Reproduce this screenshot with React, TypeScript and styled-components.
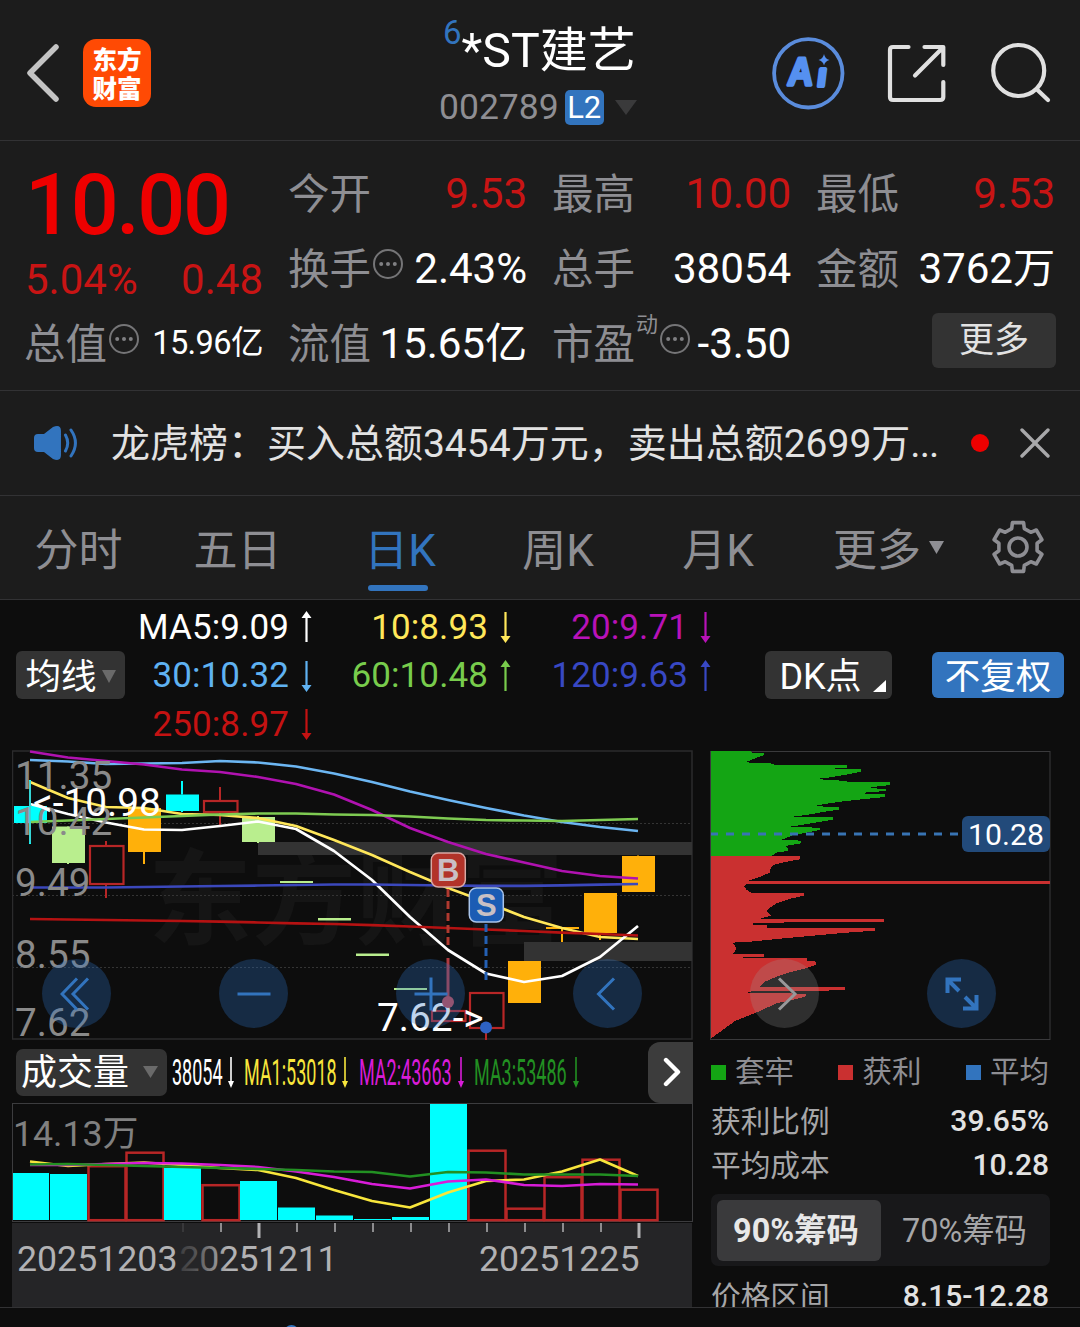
import React from 'react';
import styled, { createGlobalStyle, css } from 'styled-components';

const GlobalStyle = createGlobalStyle`
  *, *::before, *::after { box-sizing: border-box; }
  body {
    margin: 0;
    background: #0d0d0d;
    font-family: Roboto, 'Noto Sans CJK SC', sans-serif;
  }
  svg { display: block; }
`;

const c = {
  panel: '#1c1c1c',
  ground: '#0d0d0d',
  line: '#323234',
  muted: '#8e8e93',
  red: '#c81414',
  blue: '#3274be',
  button: '#333333',
};

const Screen = styled.main`
  width: 1080px;
  height: 1327px;
  overflow: hidden;
  display: flex;
  flex-direction: column;
  background: ${c.ground};
  white-space: nowrap;
`;

/* ---------- header ---------- */

const Header = styled.header`
  height: 141px;
  flex: none;
  display: grid;
  grid-template-columns: 439px 1fr auto;
  background: ${c.panel};
  border-bottom: 1px solid ${c.line};
`;

const HeaderLeft = styled.div`
  display: flex;
  align-items: center;
  gap: 22px;
  padding: 6px 0 0 25px;
`;

const Logo = styled.div`
  width: 68px;
  height: 68px;
  border-radius: 13px;
  background: #ff4a04;
  color: #fff;
  display: flex;
  flex-direction: column;
  align-items: center;
  justify-content: center;
  font: 900 24.5px/29px 'Noto Sans CJK SC', sans-serif;
`;

const TitleBlock = styled.div`
  display: flex;
  flex-direction: column;
  padding-top: 19px;
`;

const StockName = styled.h1`
  margin: 0;
  padding-left: 4px;
  display: flex;
  font-size: 48.2px;
  font-weight: 400;
  line-height: 63px;
  height: 60px;
  color: #fff;
`;

const Rank = styled.span`
  font-size: 33px;
  line-height: 27px;
  color: ${c.blue};
`;

const CodeRow = styled.div`
  display: flex;
  align-items: center;
  height: 36px;
  margin-top: 10px;
  font-size: 35.5px;
  line-height: 37px;
  color: ${c.muted};
  svg { margin-left: 11px; }
`;

const LevelBadge = styled.span`
  margin-left: 6px;
  width: 39px;
  height: 35px;
  border-radius: 5px;
  background: ${c.blue};
  color: #fff;
  font-size: 31px;
  line-height: 35px;
  text-align: center;
`;

const HeaderActions = styled.div`
  display: flex;
  align-items: center;
  padding: 5px 26px 0 0;
`;

/* ---------- quote ---------- */

const Quote = styled.section`
  height: 250px;
  flex: none;
  padding: 14px 25px 0;
  display: grid;
  grid-template-columns: repeat(4, 238px);
  grid-template-rows: repeat(3, 75px);
  column-gap: 26px;
  background: ${c.panel};
  border-bottom: 1px solid ${c.line};
`;

const PriceBlock = styled.div`
  grid-row: span 2;
  display: flex;
  flex-direction: column;
`;

const Price = styled.div`
  height: 99px;
  font-size: 84.5px;
  font-weight: 500;
  line-height: 101px;
  color: #ee0000;
  letter-spacing: -2.4px;
`;

const ChangeRow = styled.div`
  display: flex;
  justify-content: space-between;
  font-size: 42px;
  line-height: 51px;
  color: ${c.red};
`;

const Cell = styled.div`
  display: flex;
  align-items: center;
  height: 75px;
  line-height: 75px;
`;

const CellLabel = styled.span`
  margin-left: -1px;
  padding-top: 3px;
  font-size: 41.5px;
  color: ${c.muted};
`;

const CellValue = styled.span<{ $tone?: 'up'; $small?: boolean }>`
  margin-left: auto;
  padding-top: 1px;
  font-size: ${p => (p.$small ? '32.6px' : '42.2px')};
  letter-spacing: ${p => (p.$small ? '-0.6px' : '-0.1px')};
  color: ${p => (p.$tone === 'up' ? c.red : '#fff')};
`;

const DynMark = styled.span`
  font-size: 22px;
  line-height: 24px;
  align-self: flex-start;
  margin: 8px 0 0 1px;
  color: ${c.muted};
`;

const MoreButton = styled.button`
  margin: -4px -1px 0 auto;
  width: 124px;
  height: 55px;
  padding: 1px 0 0;
  border: 0;
  border-radius: 6px;
  background: ${c.button};
  color: #e2e2e2;
  font: 400 35px/54px Roboto, 'Noto Sans CJK SC', sans-serif;
`;

/* ---------- news ---------- */

const News = styled.section`
  height: 105px;
  flex: none;
  display: flex;
  align-items: center;
  padding: 0 30px 0 33px;
  background: ${c.panel};
  border-bottom: 1px solid ${c.line};
`;

const NewsText = styled.p`
  margin: 0 0 0 32px;
  padding-top: 2px;
  width: 859px;
  font-size: 39px;
  line-height: 60px;
  color: #e2e2e2;
`;

const Ellipse = styled.span`
  letter-spacing: -0.9px;
`;

const Dot = styled.i`
  width: 18px;
  height: 18px;
  margin: 0 31px 0 2px;
  border-radius: 50%;
  background: #ee0000;
`;

/* ---------- tabs ---------- */

const Tabs = styled.nav`
  height: 104px;
  flex: none;
  display: grid;
  grid-template-columns: 157px 161px 160px 160px 160px 181px 77px;
  background: ${c.panel};
  border-bottom: 1px solid ${c.line};
`;

const Tab = styled.div<{ $active?: boolean }>`
  display: flex;
  flex-direction: column;
  align-items: center;
  padding-top: 26px;
  font-size: 44px;
  line-height: 58px;
  color: ${p => (p.$active ? c.blue : c.muted)};
  ${p =>
    p.$active &&
    css`
      span { padding-left: 4px; }
      &::after {
        content: '';
        width: 60px;
        height: 6px;
        margin-top: 5px;
        border-radius: 3px;
        background: ${c.blue};
      }
    `}
`;

const MoreTab = styled(Tab)`
  flex-direction: row;
  justify-content: center;
  align-items: flex-start;
  svg { margin: 19px 0 0 8px; }
`;

const GearSlot = styled.div`
  display: flex;
  justify-content: center;
  padding-top: 24px;
`;

/* ---------- moving averages ---------- */

const Averages = styled.section`
  height: 150px;
  flex: none;
  display: flex;
  align-items: flex-start;
  padding: 2px 16px 0;
`;

const Chip = styled.button<{ $w: number; $blue?: boolean }>`
  width: ${p => p.$w}px;
  height: ${p => (p.$blue ? 46 : 48)}px;
  margin-top: ${p => (p.$blue ? 50 : 49)}px;
  padding: 3px 0 0;
  border: 0;
  border-radius: 6px;
  display: flex;
  align-items: center;
  justify-content: center;
  gap: 5px;
  background: ${p => (p.$blue ? c.blue : c.button)};
  color: #fff;
  font: 400 35.5px/46px Roboto, 'Noto Sans CJK SC', sans-serif;
`;

const CornerChip = styled(Chip)`
  margin-left: 53px;
  margin-right: 40px;
  padding-left: 8px;
  gap: 11px;
  font-size: 36px;
  svg { align-self: flex-end; margin-bottom: 7px; }
`;

const MaGrid = styled.div`
  display: grid;
  grid-template-columns: 188px 199px 200px;
  grid-auto-rows: 48.5px;
  padding-top: 1px;
`;

const MaItem = styled.div<{ $color: string }>`
  display: flex;
  align-items: center;
  justify-content: flex-end;
  gap: 11px;
  font-size: 35px;
  letter-spacing: 0.1px;
  color: ${p => p.$color};
`;

/* ---------- body ---------- */

const Body = styled.section`
  height: 557px;
  flex: none;
  overflow: hidden;
  position: relative;
  display: grid;
  grid-template-columns: 681px 341px;
  column-gap: 17px;
  padding-left: 12px;
`;

const Column = styled.div`
  display: flex;
  flex-direction: column;
`;

const ControlRow = styled.div`
  position: absolute;
  left: 42px;
  top: 209px;
  display: flex;
  gap: 108px;
`;

const RoundButton = styled.button<{ $gray?: boolean }>`
  width: 69px;
  height: 69px;
  padding: 0;
  border: 0;
  border-radius: 50%;
  display: flex;
  align-items: center;
  justify-content: center;
  color: ${p => (p.$gray ? '#98989a' : c.blue)};
  background: ${p => (p.$gray ? 'rgba(160,160,160,.24)' : 'rgba(44,112,196,.3)')};
`;

const VolumeBar = styled.div`
  height: 62px;
  display: flex;
  align-items: center;
  padding-left: 4px;
`;

const VolumePicker = styled.button`
  width: 151px;
  height: 47px;
  padding: 2px 9px 0 5px;
  border: 0;
  border-radius: 7px;
  display: flex;
  align-items: center;
  justify-content: space-between;
  background: ${c.button};
  color: #fff;
  font: 400 36px/47px Roboto, 'Noto Sans CJK SC', sans-serif;
  svg { margin-top: -2px; }
`;

const VolItem = styled.div<{ $w: number; $color: string; $gap: number }>`
  width: ${p => p.$w}px;
  display: flex;
  align-items: center;
  justify-content: space-between;
  margin-left: ${p => p.$gap}px;
  color: ${p => p.$color};
`;

const Narrow = styled.span`
  width: 0;
  font-size: 36px;
  line-height: 48px;
  padding-top: 1px;
  transform: scaleX(0.5);
  transform-origin: left center;
`;

const NextButton = styled.button`
  margin-left: auto;
  width: 45px;
  height: 61px;
  padding: 0 0 0 3px;
  border: 0;
  border-radius: 12px 0 0 12px;
  display: flex;
  align-items: center;
  justify-content: center;
  background: #3c3c3c;
`;

const Legend = styled.div`
  height: 62px;
  flex: none;
  display: flex;
  justify-content: space-between;
  align-items: center;
  padding: 0 2px 0 1px;
`;

const LegendItem = styled.span<{ $color: string }>`
  display: flex;
  align-items: center;
  gap: 9px;
  font-size: 29.5px;
  line-height: 40px;
  color: ${c.muted};
  &::before {
    content: '';
    width: 15px;
    height: 15px;
    background: ${p => p.$color};
  }
`;

const StatRow = styled.div`
  height: 44px;
  flex: none;
  display: flex;
  justify-content: space-between;
  align-items: center;
  padding: 0 2px 0 1px;
  margin-top: -4px;
  margin-bottom: 4px;
  font-size: 29.7px;
  line-height: 44px;
  color: #a6a6a8;
  span { padding-top: 2px; }
  b { font-weight: 500; font-size: 30px; color: #e2e2e2; }
`;

const Segment = styled.div`
  margin: 3px 1px 12px 1px;
  height: 72px;
  flex: none;
  padding: 6px;
  display: grid;
  grid-template-columns: 164px 1fr;
  border-radius: 7px;
  background: #18181a;
`;

const SegmentItem = styled.div<{ $on?: boolean }>`
  border-radius: 6px;
  text-align: center;
  padding: ${p => (p.$on ? '1px 6px 0 0' : '1px 0 0 4px')};
  font-size: 32.4px;
  line-height: 60px;
  font-weight: ${p => (p.$on ? 700 : 400)};
  background: ${p => (p.$on ? '#3a3a3c' : 'transparent')};
  color: ${p => (p.$on ? '#e8e8e8' : '#a6a6a8')};
`;

const Footer = styled.footer`
  height: 20px;
  border-top: 1px solid ${c.line};
  overflow: hidden;
  padding: 17px 0 0 284px;
`;

const FooterKnob = styled.i`
  display: block;
  width: 15px;
  height: 15px;
  border-radius: 50%;
  background: ${c.blue};
`;

/* ---------- small glyph drawings ---------- */

const Caret = ({ w, h, color }: { w: number; h: number; color: string }) => (
  <svg width={w} height={h} viewBox="0 0 10 10" preserveAspectRatio="none">
    <path d="M0 0H10L5 10Z" fill={color} />
  </svg>
);

const Arrow = ({ up }: { up?: boolean }) => (
  <svg width="13" height="32" viewBox="0 0 13 32" fill="currentColor" transform={up ? 'rotate(180)' : undefined}>
    <path d="M5.4 1H7.6V25H11.5L6.5 32L1.500 25H5.4Z" />
  </svg>
);

const NarrowArrow = () => (
  <svg width="8" height="32" viewBox="0 0 8 32" fill="currentColor">
    <path d="M3.2 1H4.8V25H7L4 32L1 25H3.2Z" />
  </svg>
);

const DotsIcon = styled.svg`
  margin-top: -8px;
  margin-left: 1px;
`;

const Ellipsis = () => (
  <DotsIcon width="32" height="32" viewBox="0 0 32 32">
    <circle cx="16" cy="16" r="14" fill="none" stroke="#757577" strokeWidth="2" />
    <g fill="#808083">
      <circle cx="9.2" cy="16" r="2" />
      <circle cx="16" cy="16" r="2" />
      <circle cx="22.8" cy="16" r="2" />
    </g>
  </DotsIcon>
);

const gearPath = (() => {
  const pts: string[] = [];
  for (let i = 0; i < 6; i++) {
    const base = -90 + i * 60;
    [[-13, 25], [13, 25], [19, 19.5], [41, 19.5]].forEach(([a, r]) => {
      const t = ((base + a) * Math.PI) / 180;
      pts.push(`${(27 + r * Math.cos(t)).toFixed(1)} ${(27 + r * Math.sin(t)).toFixed(1)}`);
    });
  }
  return `M${pts.join('L')}Z`;
})();

/* ---------- price chart ---------- */

const STEP = 38;
const at = (i: number) => 30 + i * STEP;
const poly = (ys: number[]) => ys.map((y, i) => `${at(i)},${y}`).join(' ');

const priceLines: [string, number[]][] = [
  ['#6cb6f2', [760, 761.5, 764, 763.5, 763, 761, 762.5, 766.5, 773.5, 782, 791.5, 800, 808, 815.5, 822, 827, 831]],
  ['#b012b0', [751.5, 757.5, 761, 764.5, 769.5, 772, 777, 784, 794.5, 810, 828, 842, 854, 862.5, 871, 876, 878.5]],
  ['#ffe75a', [782, 798, 807, 808, 814, 815, 818, 826, 840, 855, 872, 888, 902, 917, 928, 937, 939]],
  ['#ffffff', [804, 814, 822.5, 829.5, 830, 826, 821.5, 829, 851, 880, 917, 950, 973.5, 982, 976, 957, 926]],
  ['#7ecb52', [822, 820.5, 819, 817.5, 816, 814.5, 813.5, 813.5, 814.5, 815, 816.5, 818.5, 820, 820.5, 821, 820, 819]],
  ['#3b48bc', [887.5, 887.5, 887.5, 887, 886.5, 886, 885.5, 885, 884.5, 884.5, 885, 885.5, 885.8, 885.8, 885.3, 884.6, 884]],
  ['#b51212', [919, 919.5, 920, 920.5, 921, 921.7, 922.5, 923.3, 924, 925.2, 926.5, 928, 929.5, 931, 932.7, 934, 935.5]],
];

type Kind = 'cyan' | 'lime' | 'gold' | 'hollow';
const fills: Record<Kind, string> = { cyan: '#00ffff', lime: '#b9ee8e', gold: '#ffb00a', hollow: '#b72626' };

const candles: [Kind, number, number, number, number][] = [
  ['cyan', 780, 806, 823, 844],
  ['lime', 826, 826.5, 863, 864],
  ['hollow', 841, 845, 885, 898],
  ['gold', 808, 808, 852, 864],
  ['cyan', 781, 794.5, 811, 812],
  ['hollow', 787, 800, 813, 825],
  ['lime', 816, 817, 842, 843],
  ['lime', 881, 881, 883, 883],
  ['lime', 918, 918, 920.5, 920.5],
  ['lime', 953.5, 953.5, 956, 956],
  ['lime', 988, 988, 990, 990],
  ['hollow', 1010, 1010, 1022, 1022],
  ['hollow', 992, 992, 1029, 1040],
  ['gold', 961, 961, 1003, 1003],
  ['gold', 927, 927, 929, 942],
  ['gold', 893, 893, 933, 940],
  ['gold', 855.5, 856, 892, 892],
];

const priceLabels: [string, number][] = [
  ['11.35', 789],
  ['10.42', 835],
  ['9.49', 895.5],
  ['8.55', 968],
  ['7.62', 1036],
];

const Marker = ({ x, y, fill, edge, ch }: { x: number; y: number; fill: string; edge: string; ch: string }) => (
  <g>
    <rect x={x - 17} y={y - 17} width="34" height="34" rx="7" fill={fill} stroke={edge} strokeWidth="1.5" />
    <text x={x} y={y + 10.5} textAnchor="middle" fontFamily="Liberation Sans, sans-serif" fontWeight="700" fontSize="31" fill="#c9c0c4">
      {ch}
    </text>
  </g>
);

const PriceChart = () => (
  <svg width="681" height="291" viewBox="12 750 681 291">
    <text x="148" y="937" fontFamily="Noto Sans CJK SC, sans-serif" fontWeight="700" fontSize="104" fill="#151515">
      东方财富
    </text>
    <g stroke="#343434" strokeDasharray="2 2">
      <path d="M12 823.5H692M12 895.5H692M12 967.5H692" />
    </g>
    <rect x="12.5" y="751" width="679.5" height="288" fill="none" stroke="#2b2b2c" strokeWidth="1.5" />
    <rect x="258" y="842" width="434" height="13" fill="#333" />
    <rect x="524" y="942" width="168" height="19" fill="#333" />
    {candles.map(([kind, hi, top, bottom, lo], i) => (
      <g key={i}>
        <path d={`M${at(i)} ${hi}V${top}M${at(i)} ${bottom}V${lo}`} stroke={fills[kind]} strokeWidth="2" />
        {kind === 'hollow' ? (
          <rect x={at(i) - 16} y={top + 1} width="33.5" height={bottom - top - 2} fill="none" stroke={fills[kind]} strokeWidth="2.2" />
        ) : (
          <rect x={at(i) - 16} y={top} width="33" height={bottom - top} fill={fills[kind]} />
        )}
      </g>
    ))}
    {priceLines.map(([color, ys]) => (
      <polyline key={color} points={poly(ys)} fill="none" stroke={color} strokeWidth="2.7" strokeLinejoin="round" />
    ))}
    <path d="M30 781V843" stroke="#35d6d6" strokeWidth="2" />
    <path d="M448 889V949" stroke="#b03a30" strokeWidth="3" strokeDasharray="8 4" />
    <path d="M448 958V1002" stroke="#b03a40" strokeWidth="3" />
    <path d="M486 924V980" stroke="#2460b4" strokeWidth="3" strokeDasharray="8 4" />
    <Marker x={448.3} y={870} fill="#b23329" edge="#d8a8a4" ch="B" />
    <Marker x={486.3} y={905} fill="#1b5cb4" edge="#a9c4ea" ch="S" />
    <g fontSize="38.7" fill="#8a8a8a">
      {priceLabels.map(([t, y]) => (
        <text key={t} x="15" y={y}>{t}</text>
      ))}
    </g>
    <g fontSize="38.8" fill="#fff">
      <text x="33" y="816">&lt;-10.98</text>
      <text x="377" y="1030.5">7.62-&gt;</text>
    </g>
    <circle cx="448" cy="1002" r="6" fill="#c04850" />
    <circle cx="486" cy="1027.5" r="6" fill="#2e62c4" />
  </svg>
);

/* ---------- cost distribution: [row, extent] in thirds of a pixel ---------- */

const trapped: [number, number][] = [
  [18, 160], [22, 145], [24, 192], [31, 192], [40, 165], [52, 136], [56, 222], [60, 222], [60, 441], [68, 441], [70, 404], [73, 404],
  [73, 483], [80, 483], [85, 460], [92, 420], [98, 385], [102, 345], [105, 395], [108, 441], [112, 441], [112, 570], [120, 570],
  [124, 535], [130, 500], [131, 557], [138, 557], [143, 492], [148, 495], [148, 555], [156, 555], [163, 485], [169, 430], [176, 380],
  [183, 345], [186, 390], [186, 417], [194, 417], [200, 375], [208, 330], [216, 272], [217, 398], [224, 398], [234, 340], [246, 265],
  [248, 360], [255, 360], [263, 320], [272, 275], [284, 246], [287, 302], [295, 302], [303, 255], [311, 265], [318, 262], [322, 232], [334, 212],
];

const profit: [number, number][] = [
  [334, 300], [343, 300], [350, 260], [358, 225], [368, 212], [382, 210], [394, 185], [407, 145], [408, 1050], [417, 1050], [418, 138],
  [424, 133], [435, 140], [443, 155], [444, 311], [452, 311], [462, 268], [475, 230], [487, 212], [497, 200], [512, 212], [521, 180],
  [522, 552], [531, 552], [533, 160], [540, 158], [541, 200], [548, 200], [549, 525], [557, 525], [563, 440], [571, 350], [580, 250],
  [590, 150], [593, 98], [601, 104], [612, 110], [626, 98], [627, 193], [635, 193], [637, 130], [640, 130], [640, 320], [647, 320],
  [650, 348], [660, 348], [672, 310], [682, 270], [695, 230], [710, 195], [726, 178], [727, 436], [736, 436], [739, 155], [744, 140],
  [746, 318], [754, 318], [763, 285], [775, 230], [800, 175], [828, 105], [850, 75], [880, 33],
];

const area = (pts: [number, number][]) => {
  const y0 = 745 + pts[0][0] / 3;
  const y1 = 745 + pts[pts.length - 1][0] / 3;
  return `711,${y0} ${pts.map(([r, e]) => `${700 + e / 3},${745 + r / 3}`).join(' ')} 711,${y1}`;
};

const CostChart = () => (
  <svg width="341" height="291" viewBox="710 750 341 291">
    <rect x="710.5" y="751.5" width="339.5" height="288" fill="none" stroke="#3a3a3c" />
    <polygon points={area(trapped)} fill="#14a514" shapeRendering="crispEdges" />
    <polygon points={area(profit)} fill="#ca3030" shapeRendering="crispEdges" />
    <path d="M711 834H960" stroke="#3874b4" strokeWidth="3" strokeDasharray="8 8" strokeDashoffset="1" />
    <rect x="962" y="816" width="88" height="36" rx="6" fill="#224a7a" />
    <text x="1006" y="844.5" textAnchor="middle" fontSize="30.2" fill="#fff">10.28</text>
  </svg>
);

/* ---------- volume ---------- */

const volumes: [number, boolean][] = [
  [1173, true], [1174, true], [1165, false], [1151.5, false], [1168, true], [1184, false], [1181, true], [1207.5, true],
  [1215.5, true], [1219, true], [1217, true], [1104, true], [1149.5, false], [1207.5, false], [1176, false], [1158.5, false], [1188.5, false],
];

const volumeLines: [string, number[]][] = [
  ['#f8e63c', [1161.5, 1166, 1164, 1162.5, 1165, 1168, 1170, 1178, 1190, 1201, 1207.5, 1192.5, 1181, 1179.5, 1171.5, 1159.5, 1176]],
  ['#d81cd8', [1165, 1165, 1164, 1163, 1163.5, 1165, 1167, 1171.5, 1177, 1184, 1188.5, 1181.5, 1179.5, 1185, 1186, 1184, 1184.5]],
  ['#229022', [1164.5, 1164, 1165, 1166, 1167, 1168, 1169, 1170, 1171.5, 1172, 1176.5, 1172, 1172.5, 1174.5, 1174.5, 1174.5, 1176]],
];

const VolumeChart = () => (
  <svg width="681" height="119" viewBox="12 1103 681 119">
    <rect x="12.5" y="1103.5" width="680" height="118" fill="none" stroke="#3c3c3e" />
    <text x="13" y="1146" fontSize="35.7" fill="#808080">14.13万</text>
    {volumes.map(([y, solid], i) =>
      solid ? (
        <rect key={i} x={at(i) - 18 + (i === 0 ? 1 : 0)} y={y} width={i === 0 ? 36 : 37} height={1220 - y} fill="#00ffff" />
      ) : (
        <rect key={i} x={at(i) - 17.5} y={y + 1.2} width="37" height={1219 - y} fill="none" stroke="#b72626" strokeWidth="2.5" />
      ),
    )}
    {volumeLines.map(([color, ys]) => (
      <polyline key={color} points={poly(ys)} fill="none" stroke={color} strokeWidth="2.7" strokeLinejoin="round" />
    ))}
  </svg>
);

const DateAxis = () => (
  <svg width="681" height="85" viewBox="12 1222 681 85">
    <defs>
      <linearGradient id="fade" gradientUnits="userSpaceOnUse" x1="176" y1="0" x2="228" y2="0">
        <stop offset="0" stopColor="#3a3a3c" />
        <stop offset="0.35" stopColor="#505052" />
        <stop offset="1" stopColor="#b2b2b4" />
      </linearGradient>
    </defs>
    <rect x="12" y="1223" width="680" height="84" fill="#252527" />
    {Array.from({ length: 13 }, (_, n) => n + 4).map(i => {
      const major = i === 6 || i === 16;
      return (
        <rect
          key={i}
          x={at(i) + (major ? -0.5 : 0)}
          y="1223"
          width={major ? 3 : 2}
          height={major ? 15 : 9}
          fill={i === 4 ? '#38383a' : major ? '#b2b2b4' : '#8c8c8e'}
        />
      );
    })}
    <g fontSize="35.7" fill="#b2b2b4">
      <text x="17" y="1271">20251203</text>
      <text x="179.5" y="1271" fill="url(#fade)" textLength="158">20251211</text>
      <text x="479" y="1271">20251225</text>
    </g>
  </svg>
);

const averages: [string, string, boolean][] = [
  ['MA5:9.09', '#ffffff', true],
  ['10:8.93', '#ffe75a', false],
  ['20:9.71', '#b812b8', false],
  ['30:10.32', '#5fb2f2', false],
  ['60:10.48', '#78cc4c', true],
  ['120:9.63', '#3848c4', true],
  ['250:8.97', '#c41212', false],
];

const volumeAverages: [string, string, number, number][] = [
  ['38054', '#fff', 63, 5],
  ['MA1:53018', '#f8e63c', 105, 9],
  ['MA2:43663', '#d81cd8', 106, 10],
  ['MA3:53486', '#229022', 106, 9],
];

const stroke = { fill: 'none', stroke: 'currentColor', strokeWidth: 3 };

export default function App() {
  return (
    <>
      <GlobalStyle />
      <Screen>
        <Header>
          <HeaderLeft>
            <svg width="36" height="60" viewBox="0 0 36 60">
              <path d="M31 4L5 30L31 56" fill="none" stroke="#c4c4c4" strokeWidth="5.5" strokeLinecap="round" strokeLinejoin="round" />
            </svg>
            <Logo>
              <span>东方</span>
              <span>财富</span>
            </Logo>
          </HeaderLeft>
          <TitleBlock>
            <StockName>
              <Rank>6</Rank>
              <span>*ST建艺</span>
            </StockName>
            <CodeRow>
              <span>002789</span>
              <LevelBadge>L2</LevelBadge>
              <Caret w={22} h={15} color="#3a3a3b" />
            </CodeRow>
          </TitleBlock>
          <HeaderActions>
            <svg width="282" height="76" viewBox="772 35 282 76">
              <circle cx="808.3" cy="73.3" r="34.2" fill="none" stroke="#5a8cdc" strokeWidth="3.8" />
              <g fill="#5590f0" stroke="#5590f0" strokeLinejoin="round" fontFamily="Liberation Sans, sans-serif" fontWeight="700">
                <text transform="translate(787 85) skewX(-5)" fontSize="39" strokeWidth="3.4" textLength="25" lengthAdjust="spacingAndGlyphs">A</text>
                <text transform="translate(816.5 86) skewX(-7)" fontSize="32" strokeWidth="4">ı</text>
              </g>
              <path d="M824 54Q825 59 829.5 60Q825 61 824 65.5Q823 61 818.5 60Q823 59 824 54Z" fill="#5590f0" />
              <g fill="none" stroke="#e0e0e0" strokeWidth="4.2" strokeLinecap="round" strokeLinejoin="round">
                <path d="M908.5 47H893Q890 47 890 50V97Q890 100 893 100H940Q943.3 100 943.3 97V82" />
                <path d="M924.5 47H943.3V65M941.5 49L915 75.5" />
                <circle cx="1018.7" cy="70.5" r="25.5" />
                <path d="M1037.5 90L1048 100" />
              </g>
            </svg>
          </HeaderActions>
        </Header>

        <Quote>
          <PriceBlock>
            <Price>10.00</Price>
            <ChangeRow>
              <span>5.04%</span>
              <span>0.48</span>
            </ChangeRow>
          </PriceBlock>
          <Cell><CellLabel>今开</CellLabel><CellValue $tone="up">9.53</CellValue></Cell>
          <Cell><CellLabel>最高</CellLabel><CellValue $tone="up">10.00</CellValue></Cell>
          <Cell><CellLabel>最低</CellLabel><CellValue $tone="up">9.53</CellValue></Cell>
          <Cell><CellLabel>换手</CellLabel><Ellipsis /><CellValue>2.43%</CellValue></Cell>
          <Cell><CellLabel>总手</CellLabel><CellValue>38054</CellValue></Cell>
          <Cell><CellLabel>金额</CellLabel><CellValue>3762万</CellValue></Cell>
          <Cell><CellLabel>总值</CellLabel><Ellipsis /><CellValue $small>15.96亿</CellValue></Cell>
          <Cell><CellLabel>流值</CellLabel><CellValue>15.65亿</CellValue></Cell>
          <Cell><CellLabel>市盈</CellLabel><DynMark>动</DynMark><Ellipsis /><CellValue>-3.50</CellValue></Cell>
          <Cell><MoreButton>更多</MoreButton></Cell>
        </Quote>

        <News>
          <svg width="46" height="38" viewBox="0 0 46 38">
            <path d="M1 14Q1 10 5 10H11L20 3Q28 0 28 7V31Q28 38 20 35L11 28H5Q1 28 1 24Z" fill={c.blue} />
            <path d="M32.5 11Q37 19 32.500 27M38 6Q47 19 38 32" fill="none" stroke={c.blue} strokeWidth="3" strokeLinecap="round" />
          </svg>
          <NewsText>龙虎榜：买入总额3454万元，卖出总额2699万<Ellipse>...</Ellipse></NewsText>
          <Dot />
          <svg width="30" height="30" viewBox="0 0 30 30">
            <path d="M2 2L28 28M28 2L2 28" stroke="#a8a8aa" strokeWidth="3.4" strokeLinecap="round" />
          </svg>
        </News>

        <Tabs>
          <Tab><span>分时</span></Tab>
          <Tab><span>五日</span></Tab>
          <Tab $active><span>日K</span></Tab>
          <Tab><span>周K</span></Tab>
          <Tab><span>月K</span></Tab>
          <MoreTab>
            <span>更多</span>
            <Caret w={15} h={13} color="#8e8e93" />
          </MoreTab>
          <GearSlot>
            <svg width="54" height="54" viewBox="0 0 54 54" fill="none" stroke="#8e8e93" strokeWidth="3.6" strokeLinejoin="round">
              <path d={gearPath} />
              <circle cx="27" cy="27" r="9" />
            </svg>
          </GearSlot>
        </Tabs>

        <Averages>
          <Chip $w={109}>
            均线
            <Caret w={14} h={13} color="#6a6a6a" />
          </Chip>
          <MaGrid>
            {averages.map(([label, color, up]) => (
              <MaItem key={label} $color={color}>
                <span>{label}</span>
                <Arrow up={up} />
              </MaItem>
            ))}
          </MaGrid>
          <CornerChip $w={127}>
            DK点
            <svg width="13" height="12"><path d="M13 0V12H0Z" fill="#fff" /></svg>
          </CornerChip>
          <Chip $w={132} $blue>不复权</Chip>
        </Averages>

        <Body>
          <Column>
            <PriceChart />
            <VolumeBar>
              <VolumePicker>
                成交量
                <Caret w={15} h={12} color="#6a6a6a" />
              </VolumePicker>
              {volumeAverages.map(([label, color, w, gap]) => (
                <VolItem key={label} $w={w} $color={color} $gap={gap}>
                  <Narrow>{label}</Narrow>
                  <NarrowArrow />
                </VolItem>
              ))}
              <NextButton>
                <svg width="20" height="30" viewBox="0 0 20 30">
                  <path d="M4 3L16 15L4 27" fill="none" stroke="#fff" strokeWidth="4.4" strokeLinecap="round" strokeLinejoin="round" />
                </svg>
              </NextButton>
            </VolumeBar>
            <VolumeChart />
            <DateAxis />
          </Column>

          <Column>
            <CostChart />
            <Legend>
              <LegendItem $color="#14a514">套牢</LegendItem>
              <LegendItem $color="#ca3030">获利</LegendItem>
              <LegendItem $color={c.blue}>平均</LegendItem>
            </Legend>
            <StatRow><span>获利比例</span><b>39.65%</b></StatRow>
            <StatRow><span>平均成本</span><b>10.28</b></StatRow>
            <Segment>
              <SegmentItem $on>90%筹码</SegmentItem>
              <SegmentItem>70%筹码</SegmentItem>
            </Segment>
            <StatRow><span>价格区间</span><b>8.15-12.28</b></StatRow>
          </Column>

          <ControlRow>
            <RoundButton>
              <svg width="34" height="34" viewBox="0 0 34 34" {...stroke}><path d="M17 1.5L2 17L17 32.5M28 1.5L13 17L28 32.5" /></svg>
            </RoundButton>
            <RoundButton>
              <svg width="34" height="34" viewBox="0 0 34 34" {...stroke}><path d="M0.5 17H33.5" /></svg>
            </RoundButton>
            <RoundButton>
              <svg width="34" height="34" viewBox="0 0 34 34" {...stroke}><path d="M0.5 17H33.5M17 0.5V33.5" /></svg>
            </RoundButton>
            <RoundButton>
              <svg width="34" height="34" viewBox="0 0 34 34" {...stroke}><path d="M23 1.5L7.5 17L23 32.5" /></svg>
            </RoundButton>
            <RoundButton $gray>
              <svg width="34" height="34" viewBox="0 0 34 34" {...stroke}><path d="M11 1.5L27 17L11 32.5" /></svg>
            </RoundButton>
            <RoundButton>
              <svg width="34" height="34" viewBox="0 0 34 34" {...stroke} strokeWidth="4"><path d="M16 2.5H2.5V16M2.5 2.5L14 14M18 31.5H31.5V18M31.5 31.5L20 20" /></svg>
            </RoundButton>
          </ControlRow>
        </Body>
        <Footer>
          <FooterKnob />
        </Footer>
      </Screen>
    </>
  );
}
